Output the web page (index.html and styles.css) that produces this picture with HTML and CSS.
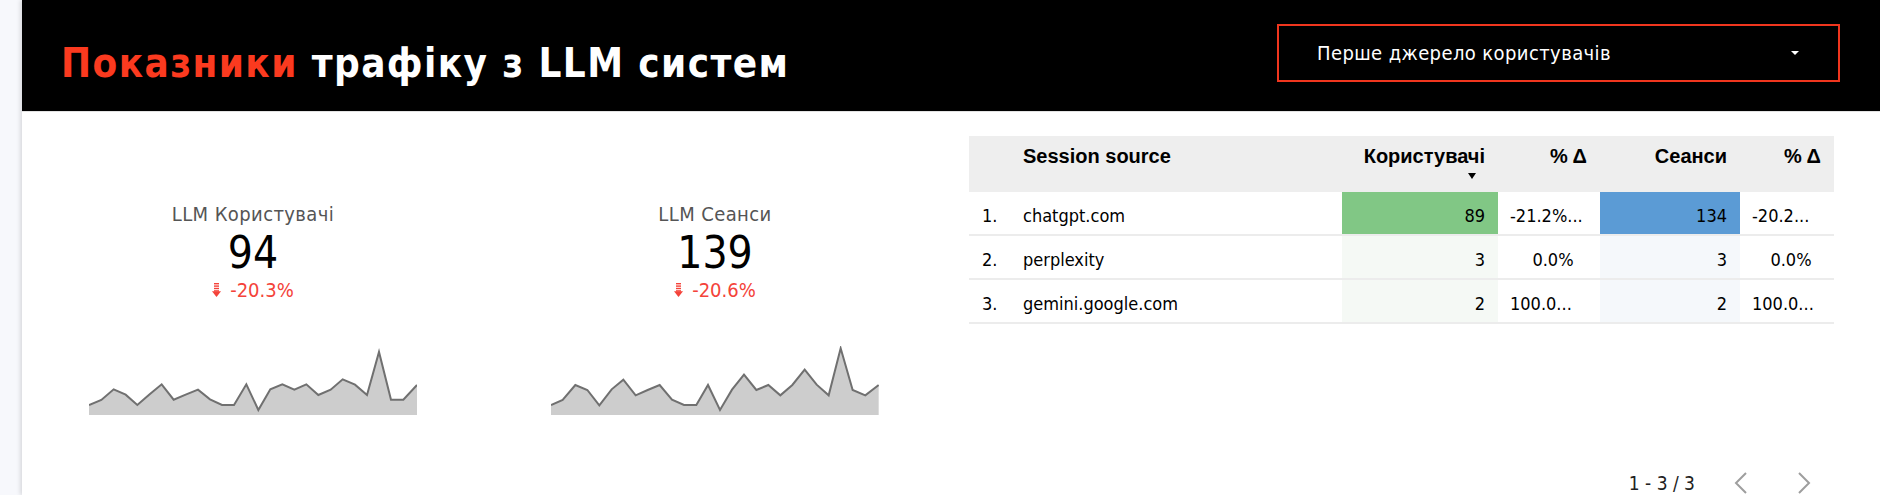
FILE: index.html
```html
<!DOCTYPE html>
<html>
<head>
  <meta charset="utf-8">
  <title>Показники трафіку з LLM систем</title>
  <link rel="stylesheet" href="styles.css">
</head>
<body>
  <div class="page">
    <!-- Шапка звіту -->
    <div class="header">
      <h1 class="title"><span class="accent">Показники</span> трафіку з LLM систем</h1>
      <div class="select">
        <span>Перше джерело користувачів</span>
        <span class="caret"></span>
      </div>
    </div>

    <div class="content">
      <!-- KPI: користувачі -->
      <div class="kpi">
        <div class="kpi-label">LLM Користувачі</div>
        <div class="kpi-value">94</div>
        <div class="kpi-delta">
          <svg class="down" width="9" height="14" viewBox="0 0 9 14"><rect x="2" y="0" width="5" height="1.4"/><rect x="2" y="2.4" width="5" height="1.4"/><rect x="2" y="4.8" width="5" height="1.4"/><rect x="2" y="7.2" width="5" height="1.4"/><polygon points="0,8.2 9,8.2 4.5,14"/></svg>
          -20.3%
        </div>
        <svg class="spark" width="328" height="69" viewBox="268 500 984 207" preserveAspectRatio="none">
          <polygon class="area" points="268,707 268,677 305,662 342,630 378,646 413,677 450,645 486,615 522,661 558,646 595,631 631,660 667,677 703,677 740,615 776,692 812,630 848,615 884,631 920,615 956,647 993,631 1029,600 1066,616 1102,647 1138,518 1174,661 1211,661 1252,617 1252,707"/>
          <polyline class="line" points="268,677 305,662 342,630 378,646 413,677 450,645 486,615 522,661 558,646 595,631 631,660 667,677 703,677 740,615 776,692 812,630 848,615 884,631 920,615 956,647 993,631 1029,600 1066,616 1102,647 1138,518 1174,661 1211,661 1252,617"/>
        </svg>
      </div>

      <!-- KPI: сеанси -->
      <div class="kpi">
        <div class="kpi-label">LLM Сеанси</div>
        <div class="kpi-value">139</div>
        <div class="kpi-delta">
          <svg class="down" width="9" height="14" viewBox="0 0 9 14"><rect x="2" y="0" width="5" height="1.4"/><rect x="2" y="2.4" width="5" height="1.4"/><rect x="2" y="4.8" width="5" height="1.4"/><rect x="2" y="7.2" width="5" height="1.4"/><polygon points="0,8.2 9,8.2 4.5,14"/></svg>
          -20.6%
        </div>
        <svg class="spark" width="328" height="69" viewBox="243 500 984 207" preserveAspectRatio="none">
          <polygon class="area" points="243,707 243,677 278,662 316,617 352,632 388,678 425,630 460,601 497,648 533,632 569,617 606,661 642,677 679,677 714,617 750,692 786,631 822,586 859,632 895,617 931,648 967,617 1004,571 1040,616 1076,648 1112,507 1148,632 1186,648 1226,617 1226,707"/>
          <polyline class="line" points="243,677 278,662 316,617 352,632 388,678 425,630 460,601 497,648 533,632 569,617 606,661 642,677 679,677 714,617 750,692 786,631 822,586 859,632 895,617 931,648 967,617 1004,571 1040,616 1076,648 1112,507 1148,632 1186,648 1226,617"/>
        </svg>
      </div>

      <!-- Таблиця джерел -->
      <div class="panel">
        <table>
          <colgroup>
            <col style="width:43px">
            <col style="width:330px">
            <col style="width:156px">
            <col style="width:102px">
            <col style="width:140px">
            <col style="width:94px">
          </colgroup>
          <thead>
            <tr>
              <th></th>
              <th class="left">Session source</th>
              <th>Користувачі<span class="sort"></span></th>
              <th>% Δ</th>
              <th>Сеанси</th>
              <th>% Δ</th>
            </tr>
          </thead>
          <tbody>
            <tr>
              <td class="idx">1.</td>
              <td>chatgpt.com</td>
              <td class="num users top">89</td>
              <td class="delta">-21.2%...</td>
              <td class="num sessions top">134</td>
              <td class="delta">-20.2...</td>
            </tr>
            <tr>
              <td class="idx">2.</td>
              <td>perplexity</td>
              <td class="num users">3</td>
              <td class="delta flat">0.0%</td>
              <td class="num sessions">3</td>
              <td class="delta flat">0.0%</td>
            </tr>
            <tr>
              <td class="idx">3.</td>
              <td>gemini.google.com</td>
              <td class="num users">2</td>
              <td class="delta">100.0...</td>
              <td class="num sessions">2</td>
              <td class="delta">100.0...</td>
            </tr>
          </tbody>
        </table>

        <div class="pager">
          <span>1 - 3 / 3</span>
          <svg width="16" height="22" viewBox="0 0 16 22"><polyline points="13,1 3,11 13,21"/></svg>
          <svg width="16" height="22" viewBox="0 0 16 22"><polyline points="3,1 13,11 3,21"/></svg>
        </div>
      </div>
    </div>
  </div>
</body>
</html>
```

FILE: styles.css
```css
/* Загальне */
body {
  margin: 0;
  background-color: #f7f8fc;
  font-family: "DejaVu Sans Condensed", "DejaVu Sans", sans-serif;
  font-stretch: condensed;
  color: #000;
}

.page {
  margin-left: 22px;
  height: 495px;
  background-color: #fff;
  box-shadow: -2px 0 4px rgba(0, 0, 0, 0.12);
  overflow: hidden;
}

/* Шапка */
.header {
  display: flex;
  align-items: flex-start;
  justify-content: space-between;
  height: 112px;
  padding: 24px 40px 0 39px;
  box-sizing: border-box;
  background-color: #000;
  border-bottom: 1px solid #e2e2e2;
}

.title {
  margin: 15px 0 0 0;
  font-size: 40px;
  line-height: 48px;
  font-weight: bold;
  letter-spacing: 1.4px;
  color: #fff;
  white-space: nowrap;
}

.accent {
  color: #fb3a1f;
}

.select {
  display: flex;
  align-items: center;
  justify-content: space-between;
  width: 563px;
  height: 58px;
  box-sizing: border-box;
  padding: 0 39px 0 38px;
  border: 2px solid #f0361e;
  color: #fff;
  font-size: 20px;
  letter-spacing: 0.4px;
}

.caret {
  width: 0;
  height: 0;
  border-left: 4px solid transparent;
  border-right: 4px solid transparent;
  border-top: 4px solid #fff;
}

/* Контент */
.content {
  display: flex;
  align-items: flex-start;
}

.kpi {
  display: flex;
  flex-direction: column;
  align-items: center;
  width: 462px;
  padding-top: 90px;
}

.kpi-label {
  font-size: 20px;
  line-height: 24px;
  letter-spacing: 0.4px;
  color: #555;
}

.kpi-value {
  margin-top: 5px;
  font-size: 44px;
  line-height: 44px;
}

.kpi-delta {
  display: flex;
  align-items: center;
  gap: 9px;
  margin-top: 3px;
  font-size: 20px;
  line-height: 24px;
  color: #f4433a;
}

.down {
  fill: #f4433a;
}

.spark {
  display: block;
  margin-top: 44px;
}

.spark .area {
  fill: #cdcdcd;
}

.spark .line {
  fill: none;
  stroke: #707070;
  stroke-width: 6;
  stroke-linejoin: miter;
}

/* Таблиця */
.panel {
  display: flex;
  flex-direction: column;
  margin: 24px 0 0 23px;
  width: 865px;
}

table {
  border-collapse: collapse;
  table-layout: fixed;
  width: 865px;
}

th {
  height: 56px;
  box-sizing: border-box;
  padding: 8px 13px 0 13px;
  vertical-align: top;
  text-align: right;
  background-color: #eee;
  font-family: "Liberation Sans", Arial, sans-serif;
  font-size: 20px;
  line-height: 24px;
  font-weight: bold;
}

th.left {
  text-align: left;
  padding-left: 11px;
}

.sort {
  display: block;
  width: 0;
  height: 0;
  margin: 5px 9px 0 auto;
  border-left: 4px solid transparent;
  border-right: 4px solid transparent;
  border-top: 6px solid #000;
}

td {
  height: 38px;
  padding: 4px 11px 0 11px;
  border-bottom: 2px solid #ececec;
  font-size: 18px;
  white-space: nowrap;
  overflow: hidden;
}

td.idx {
  padding-left: 13px;
}

td.num {
  text-align: right;
  padding-right: 13px;
}

td.users {
  background-color: #f5f9f5;
}

td.sessions {
  background-color: #f5f8fb;
}

td.users.top {
  background-color: #81c785;
}

td.sessions.top {
  background-color: #5b9bd5;
}

td.delta {
  padding-left: 12px;
  padding-right: 4px;
}

td.delta.flat {
  text-align: center;
}

/* Пагінація */
.pager {
  display: flex;
  align-items: center;
  justify-content: flex-end;
  margin-top: 148px;
  margin-right: 22px;
  font-size: 19px;
  color: #222;
}

.pager span {
  line-height: 16px;
  margin-right: 24px;
}

.pager svg {
  margin-left: 14px;
  margin-right: 33px;
}

.pager svg:last-child {
  margin-right: 0;
}

.pager polyline {
  fill: none;
  stroke: #9e9e9e;
  stroke-width: 2;
}
```
